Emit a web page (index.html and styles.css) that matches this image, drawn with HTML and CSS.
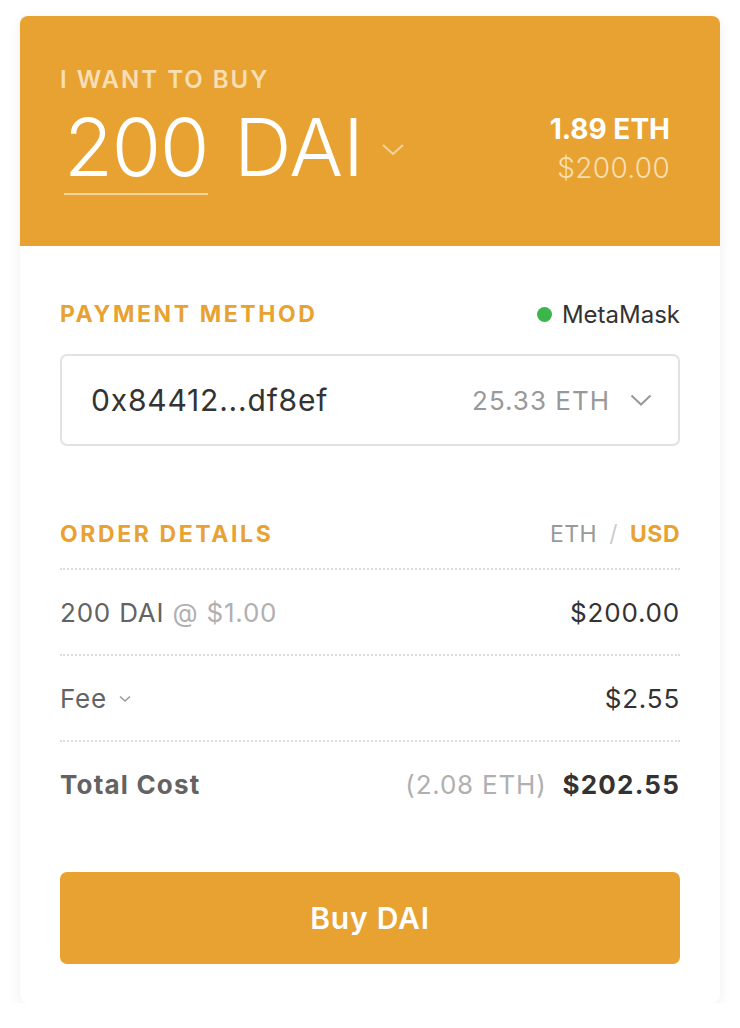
FILE: index.html
```html
<!DOCTYPE html>
<html>
<head>
<meta charset="utf-8">
<link rel="stylesheet" href="styles.css">
</head>
<body>
<div class="card">
  <div class="hero">
    <div class="hero-label">I WANT TO BUY</div>
    <div class="hero-row">
      <div class="amount">
        <span class="qty">200</span>
        <span class="token">DAI</span>
        <svg class="hero-chev" width="24" height="14" viewBox="0 0 24 14"><path d="M2 2 L12 11 L22 2" fill="none" stroke="#f6d49c" stroke-width="2"/></svg>
      </div>
      <div class="conv">
        <div class="conv-eth">1.89 ETH</div>
        <div class="conv-usd">$200.00</div>
      </div>
    </div>
  </div>
  <div class="body">
    <div class="sec-head">
      <div class="sec-title">PAYMENT METHOD</div>
      <div class="wallet"><span class="dot"></span>MetaMask</div>
    </div>
    <div class="select">
      <span class="addr">0x84412...df8ef</span>
      <span class="bal">25.33 ETH</span>
      <svg class="sel-chev" width="22" height="13" viewBox="0 0 22 13"><path d="M1.5 1.5 L11 10.5 L20.5 1.5" fill="none" stroke="#999" stroke-width="2"/></svg>
    </div>
    <div class="sec-head order-head">
      <div class="sec-title">ORDER DETAILS</div>
      <div class="units"><span class="u-eth">ETH</span><span class="slash">/</span><span class="u-usd">USD</span></div>
    </div>
    <div class="rows">
      <div class="row">
        <div class="r-left">200 DAI <span class="muted">@ $1.00</span></div>
        <div class="r-right">$200.00</div>
      </div>
      <div class="row">
        <div class="r-left fee">Fee <svg class="fee-chev" width="12" height="8" viewBox="0 0 12 8"><path d="M1 1.5 L6 6 L11 1.5" fill="none" stroke="#999" stroke-width="1.5"/></svg></div>
        <div class="r-right">$2.55</div>
      </div>
      <div class="row total">
        <div class="r-left">Total Cost</div>
        <div class="r-right"><span class="muted eth-total">(2.08 ETH)</span><b>$202.55</b></div>
      </div>
    </div>
    <button class="buy">Buy DAI</button>
  </div>
</div>
</body>
</html>
```
FILE: styles.css
```css
* { box-sizing: border-box; }
body {
  margin: 0;
  background: #fff;
  font-family: Inter, Roboto, "Liberation Sans", sans-serif;
}
.card {
  margin: 16px 20px 0;
  width: 700px;
  height: 987px;
  border-radius: 8px;
  overflow: hidden;
  background: #fff;
  box-shadow: 0 3px 14px rgba(0,0,0,0.07);
}
.hero {
  background: #e8a232;
  height: 230px;
  padding: 50px 50px 0 40px;
}
.hero-label {
  color: #f8deb3;
  font-size: 24px;
  font-weight: 600;
  letter-spacing: 2px;
  line-height: 28px;
}
.hero-row {
  display: flex;
  justify-content: space-between;
  align-items: flex-start;
}
.amount {
  display: flex;
  align-items: flex-start;
  color: #fff;
  font-weight: 300;
  font-size: 80px;
  line-height: 92px;
  margin-top: 7px;
}
.qty {
  border-bottom: 2px solid #f6d49c;
  margin-left: 4px;
  letter-spacing: -1.3px;
}
.token { margin-left: 26px; }
.hero-chev { margin-left: 17px; margin-top: 42px; }
.conv {
  text-align: right;
  padding-top: 18px;
}
.conv-eth {
  color: #fff;
  font-weight: 700;
  font-size: 28px;
  line-height: 34px;
}
.conv-usd {
  color: #f8deb3;
  font-size: 28px;
  font-weight: 300;
  letter-spacing: 0.3px;
  line-height: 44px;
}
.body {
  padding: 52px 40px 0;
}
.sec-head {
  display: flex;
  justify-content: space-between;
  align-items: center;
}
.sec-title {
  color: #e8a232;
  font-weight: 700;
  font-size: 23px;
  letter-spacing: 2.6px;
  line-height: 32px;
}
.wallet {
  display: flex;
  align-items: center;
  color: #333;
  font-size: 24px;
}
.dot {
  width: 15px; height: 15px;
  border-radius: 50%;
  background: #3cb54a;
  margin-right: 10px;
}
.select {
  margin-top: 24px;
  height: 92px;
  border: 2px solid #e2e2e2;
  border-radius: 7px;
  display: flex;
  align-items: center;
  padding: 0 26px 0 29px;
}
.addr { color: #333; font-size: 30px; letter-spacing: 0.8px; flex: 1; }
.bal { color: #999; font-size: 26px; letter-spacing: 1px; margin-right: 20px; }
.order-head { margin-top: 72px; }
.units { font-size: 23px; letter-spacing: 0.5px; display: flex; gap: 12px; }
.u-eth { color: #999; }
.slash { color: #ccc; }
.u-usd { color: #e8a232; font-weight: 700; }
.rows { margin-top: 18px; }
.row {
  display: flex;
  justify-content: space-between;
  align-items: center;
  height: 86px;
  border-top: 2px dotted #ddd;
  font-size: 26px;
  letter-spacing: 0.8px;
}
.r-left { color: #636363; display: flex; align-items: center; gap: 8px; }
.r-left.fee { gap: 12px; }
.r-right { color: #333; }
.muted { color: #b0b0b0; }
.fee-chev { margin-top: 2px; }
.total .r-left { font-weight: 700; color: #636363; letter-spacing: 1.2px; }
.total .r-right { display: flex; align-items: center; gap: 16px; }
.total b { font-weight: 700; color: #333; letter-spacing: 1.2px; }
.buy {
  display: block;
  margin-top: 46px;
  width: 100%;
  height: 92px;
  border: none;
  border-radius: 7px;
  background: #e8a232;
  color: #fff;
  font-family: inherit;
  font-size: 30px;
  font-weight: 600;
  letter-spacing: 0.8px;
}
```
